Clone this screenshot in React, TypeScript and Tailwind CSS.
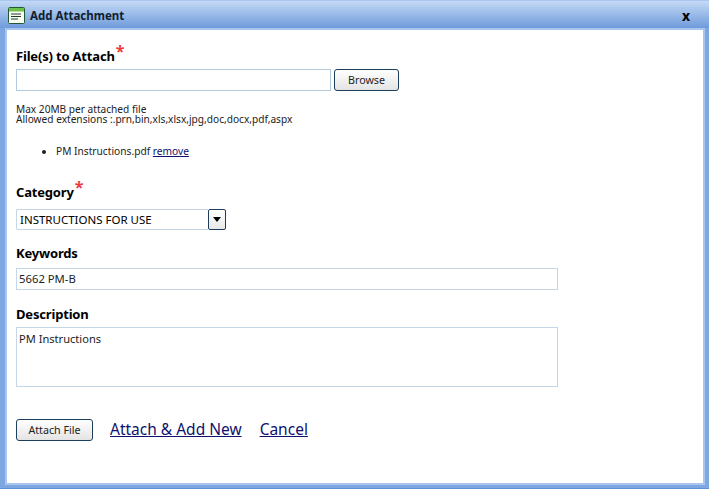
import React from 'react';

const font = { fontFamily: '"Noto Sans", "Open Sans", sans-serif' };

const Star = () => <span className="text-[16px] leading-none text-[#ec3a3f] relative -top-[3px] left-[1px]">*</span>;

const Label = ({ children, required }: { children: string; required?: boolean }) => (
  <div className="flex items-start h-[20px] text-[13px] font-bold leading-[20px] text-black tracking-[-0.18px]">
    {children}
    {required && <Star />}
  </div>
);

const NoteIcon = () => (
  <svg width="17" height="17" viewBox="0 0 17 17" className="shrink-0">
    <rect x="0.5" y="0.5" width="16" height="16" rx="1" fill="#fbfdf5" stroke="#1f5a35" />
    <rect x="1" y="1" width="15" height="3.5" fill="#6fc14a" />
    <path d="M3 7h10M3 9.5h10M3 12h7" stroke="#1d3d2a" strokeWidth="1" />
  </svg>
);

const ButtonBox = ({ children, className }: { children: string; className: string }) => (
  <button className={`h-[22px] rounded-[3px] border border-[#1d3f5e] bg-gradient-to-b from-white to-[#e4e4e4] text-[10.7px] text-[#222] leading-none ${className}`}>
    {children}
  </button>
);

export default function App() {
  return (
    <div style={font} className="w-[709px] h-[489px] flex flex-col bg-[#7ea6e0] border-t border-[#a9c6ee] overflow-hidden">
      <div className="h-[27px] shrink-0 flex items-center justify-between pl-[8px] pr-[19px] pt-[2px] bg-gradient-to-b from-[#c4d9f5] to-[#6f9bdb]">
        <div className="flex items-center gap-[5px]">
          <NoteIcon />
          <span className="text-[11.5px] font-bold text-[#10202f]">Add Attachment</span>
        </div>
        <span className="text-[14px] font-bold leading-none text-black">x</span>
      </div>
      <div className="flex-1 flex pl-[5px] pr-[4px] pb-[3px] border-b-[1px] border-[#5f8fd6]">
        <div className="flex-1 bg-white border-2 border-[#a9c6f0] pl-[9px] pt-[16px] flex flex-col">
          <Label required>File(s) to Attach</Label>
          <div className="flex items-center gap-[3px] mt-[3px]">
            <div className="w-[315px] h-[22px] border border-[#b5c9dc] bg-white" />
            <ButtonBox className="w-[65px]">Browse</ButtonBox>
          </div>
          <div className="mt-[13px] text-[10.15px] leading-[10px] text-[#222]">
            <div>Max 20MB per attached file</div>
            <div>Allowed extensions :.prn,bin,xls,xlsx,jpg,doc,docx,pdf,aspx</div>
          </div>
          <ul className="mt-[20px] ml-[40px] list-disc text-[10.2px] leading-[14px] text-[#222]">
            <li>
              PM Instructions.pdf <a href="#" className="text-[#10106e] underline">remove</a>
            </li>
          </ul>
          <div className="mt-[24px]">
            <Label required>Category</Label>
          </div>
          <div className="flex mt-[7px] w-[210px] h-[21px]">
            <div className="flex-1 border border-[#c5d6e6] border-r-0 rounded-l-[2px] pl-[3px] text-[11.5px] leading-[19px] text-black">INSTRUCTIONS FOR USE</div>
            <div className="w-[18px] border border-[#1d3f5e] rounded-[2px] bg-gradient-to-b from-white to-[#e8e8e8] flex items-center justify-center">
              <svg width="8" height="5" viewBox="0 0 8 5"><path d="M0 0h8L4 5z" fill="#000" /></svg>
            </div>
          </div>
          <div className="mt-[13px]">
            <Label>Keywords</Label>
          </div>
          <div className="mt-[5px] w-[542px] h-[22px] border border-[#c5d6e6] pl-[2px] text-[11.3px] leading-[20px] text-[#222]">5662 PM-B</div>
          <div className="mt-[14px]">
            <Label>Description</Label>
          </div>
          <div className="mt-[3px] w-[542px] h-[60px] border border-[#c5d6e6] pl-[2px] pt-[2px] text-[11.1px] leading-[17px] text-[#222]">PM Instructions</div>
          <div className="flex items-center mt-[32px] h-[22px]">
            <ButtonBox className="w-[77px]">Attach File</ButtonBox>
            <a href="#" className="ml-[17px] text-[15.5px] text-[#10106e] underline">Attach &amp; Add New</a>
            <a href="#" className="ml-[18px] text-[15.5px] text-[#10106e] underline">Cancel</a>
          </div>
        </div>
      </div>
    </div>
  );
}
